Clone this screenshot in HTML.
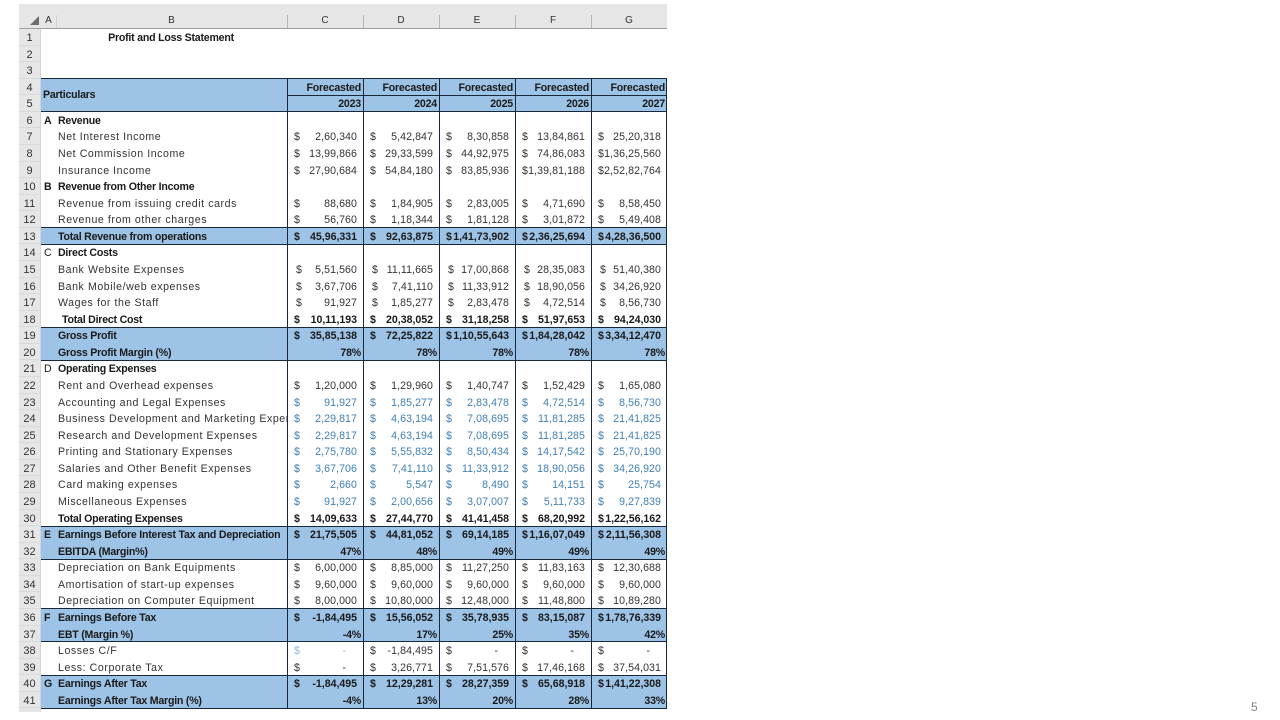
<!DOCTYPE html>
<html><head><meta charset="utf-8"><style>
html,body{margin:0;padding:0;background:#fff}
#p{position:relative;width:1280px;height:720px;overflow:hidden;background:#fff;font:10.6px/18.4px "Liberation Sans",sans-serif;color:#1a1a1a;filter:blur(.25px)}
#p div{box-sizing:border-box}
.hd{position:absolute;left:19px;top:4px;width:648px;height:25px;background:#e6e6e6;border-bottom:1px solid #a0a0a0}
.hd b{position:absolute;top:11px;font-weight:400;font-size:10px;line-height:12px;text-align:center;color:#333;width:76px;border-right:1px solid #b4b4b4;height:13px}
.r{position:absolute;left:19px;width:648px;height:16.57px;top:calc(29px + 16.57px * var(--n));display:flex;white-space:nowrap}
.n{width:22px;flex:none;background:#e6e6e6;text-align:center;border-bottom:1px solid #dadada;border-right:1px solid #d4d4d4;color:#333;height:16.57px;font-size:11px}
.a{width:17px;flex:none;padding-left:3px;font-weight:700}
.l{width:229px;flex:none;overflow:hidden;letter-spacing:.57px;color:#333}
.v{width:76px;flex:none;position:relative;text-align:right;padding-right:6px;letter-spacing:.08px;color:#333}
.v s{position:absolute;left:7px;top:0;text-decoration:none}
.p{padding-right:2px}
.d{padding-right:17px}
.b .l{font-weight:700;letter-spacing:-.22px;color:#1a1a1a}
.b .v{font-weight:700;letter-spacing:-.02px;color:#1a1a1a}
.b .p{letter-spacing:-.2px}
.u{background:linear-gradient(90deg,#0000 22px,#9dc3e6 22px)}
.t .v{color:#3f7fb5}
.i .v s{left:9px}
.ln{position:absolute;background:#16283a}
</style></head><body><div id="p">
<div class="hd">
<svg style="position:absolute;left:11px;top:12px" width="9" height="9"><path d="M9 0V9H0Z" fill="#6e6e6e"/></svg>
<b style="left:22px;width:15px;border-right:1px solid #d4d4d4">A</b>
<b style="left:37px;width:231px">B</b>
<b style="left:268px">C</b><b style="left:344px">D</b><b style="left:420px">E</b><b style="left:496px">F</b><b style="left:572px;border-right:0">G</b>
</div>

<div class="r" style="--n:0"><div class="n">1</div><div class="a"></div><div class="l" style="font-weight:700;letter-spacing:-.22px;color:#1a1a1a;text-align:center;width:229px;padding-right:3px">Profit and Loss Statement</div></div>
<div class="r" style="--n:1"><div class="n">2</div></div>
<div class="r" style="--n:2"><div class="n">3</div></div>
<div class="r b u" style="--n:3"><div class="n">4</div><div class="a"></div><div class="l"></div><div class="v p">Forecasted</div><div class="v p">Forecasted</div><div class="v p">Forecasted</div><div class="v p">Forecasted</div><div class="v p">Forecasted</div></div>
<div class="r b u" style="--n:4"><div class="n">5</div><div class="a"></div><div class="l"></div><div class="v p">2023</div><div class="v p">2024</div><div class="v p">2025</div><div class="v p">2026</div><div class="v p">2027</div></div>
<div style="position:absolute;left:43px;top:86px;font-weight:700;color:#1a1a1a;letter-spacing:-.22px">Particulars</div>

<div class="r b" style="--n:5"><div class="n">6</div><div class="a">A</div><div class="l">Revenue</div></div>
<div class="r" style="--n:6"><div class="n">7</div><div class="a"></div><div class="l">Net Interest Income</div><div class="v"><s>$</s>2,60,340</div><div class="v"><s>$</s>5,42,847</div><div class="v"><s>$</s>8,30,858</div><div class="v"><s>$</s>13,84,861</div><div class="v"><s>$</s>25,20,318</div></div>
<div class="r" style="--n:7"><div class="n">8</div><div class="a"></div><div class="l">Net Commission Income</div><div class="v"><s>$</s>13,99,866</div><div class="v"><s>$</s>29,33,599</div><div class="v"><s>$</s>44,92,975</div><div class="v"><s>$</s>74,86,083</div><div class="v"><s>$</s>1,36,25,560</div></div>
<div class="r" style="--n:8"><div class="n">9</div><div class="a"></div><div class="l">Insurance Income</div><div class="v"><s>$</s>27,90,684</div><div class="v"><s>$</s>54,84,180</div><div class="v"><s>$</s>83,85,936</div><div class="v"><s>$</s>1,39,81,188</div><div class="v"><s>$</s>2,52,82,764</div></div>
<div class="r b" style="--n:9"><div class="n">10</div><div class="a">B</div><div class="l">Revenue from Other Income</div></div>
<div class="r" style="--n:10"><div class="n">11</div><div class="a"></div><div class="l">Revenue from issuing credit cards</div><div class="v"><s>$</s>88,680</div><div class="v"><s>$</s>1,84,905</div><div class="v"><s>$</s>2,83,005</div><div class="v"><s>$</s>4,71,690</div><div class="v"><s>$</s>8,58,450</div></div>
<div class="r" style="--n:11"><div class="n">12</div><div class="a"></div><div class="l">Revenue from other charges</div><div class="v"><s>$</s>56,760</div><div class="v"><s>$</s>1,18,344</div><div class="v"><s>$</s>1,81,128</div><div class="v"><s>$</s>3,01,872</div><div class="v"><s>$</s>5,49,408</div></div>
<div class="r b u" style="--n:12"><div class="n">13</div><div class="a"></div><div class="l">Total Revenue from operations</div><div class="v"><s>$</s>45,96,331</div><div class="v"><s>$</s>92,63,875</div><div class="v"><s>$</s>1,41,73,902</div><div class="v"><s>$</s>2,36,25,694</div><div class="v"><s>$</s>4,28,36,500</div></div>
<div class="r b" style="--n:13"><div class="n">14</div><div class="a" style="font-weight:400">C</div><div class="l">Direct Costs</div></div>
<div class="r i" style="--n:14"><div class="n">15</div><div class="a"></div><div class="l">Bank Website Expenses</div><div class="v"><s>$</s>5,51,560</div><div class="v"><s>$</s>11,11,665</div><div class="v"><s>$</s>17,00,868</div><div class="v"><s>$</s>28,35,083</div><div class="v"><s>$</s>51,40,380</div></div>
<div class="r i" style="--n:15"><div class="n">16</div><div class="a"></div><div class="l">Bank Mobile/web expenses</div><div class="v"><s>$</s>3,67,706</div><div class="v"><s>$</s>7,41,110</div><div class="v"><s>$</s>11,33,912</div><div class="v"><s>$</s>18,90,056</div><div class="v"><s>$</s>34,26,920</div></div>
<div class="r i" style="--n:16"><div class="n">17</div><div class="a"></div><div class="l">Wages for the Staff</div><div class="v"><s>$</s>91,927</div><div class="v"><s>$</s>1,85,277</div><div class="v"><s>$</s>2,83,478</div><div class="v"><s>$</s>4,72,514</div><div class="v"><s>$</s>8,56,730</div></div>
<div class="r b" style="--n:17"><div class="n">18</div><div class="a"></div><div class="l" style="padding-left:4px">Total Direct Cost</div><div class="v"><s>$</s>10,11,193</div><div class="v"><s>$</s>20,38,052</div><div class="v"><s>$</s>31,18,258</div><div class="v"><s>$</s>51,97,653</div><div class="v"><s>$</s>94,24,030</div></div>
<div class="r b u" style="--n:18"><div class="n">19</div><div class="a"></div><div class="l">Gross Profit</div><div class="v"><s>$</s>35,85,138</div><div class="v"><s>$</s>72,25,822</div><div class="v"><s>$</s>1,10,55,643</div><div class="v"><s>$</s>1,84,28,042</div><div class="v"><s>$</s>3,34,12,470</div></div>
<div class="r b u" style="--n:19"><div class="n">20</div><div class="a"></div><div class="l">Gross Profit Margin (%)</div><div class="v p">78%</div><div class="v p">78%</div><div class="v p">78%</div><div class="v p">78%</div><div class="v p">78%</div></div>
<div class="r b" style="--n:20"><div class="n">21</div><div class="a" style="font-weight:400">D</div><div class="l">Operating Expenses</div></div>
<div class="r" style="--n:21"><div class="n">22</div><div class="a"></div><div class="l">Rent and Overhead expenses</div><div class="v"><s>$</s>1,20,000</div><div class="v"><s>$</s>1,29,960</div><div class="v"><s>$</s>1,40,747</div><div class="v"><s>$</s>1,52,429</div><div class="v"><s>$</s>1,65,080</div></div>
<div class="r t" style="--n:22"><div class="n">23</div><div class="a"></div><div class="l">Accounting and Legal Expenses</div><div class="v"><s>$</s>91,927</div><div class="v"><s>$</s>1,85,277</div><div class="v"><s>$</s>2,83,478</div><div class="v"><s>$</s>4,72,514</div><div class="v"><s>$</s>8,56,730</div></div>
<div class="r t" style="--n:23"><div class="n">24</div><div class="a"></div><div class="l">Business Development and Marketing Expenses</div><div class="v"><s>$</s>2,29,817</div><div class="v"><s>$</s>4,63,194</div><div class="v"><s>$</s>7,08,695</div><div class="v"><s>$</s>11,81,285</div><div class="v"><s>$</s>21,41,825</div></div>
<div class="r t" style="--n:24"><div class="n">25</div><div class="a"></div><div class="l">Research and Development Expenses</div><div class="v"><s>$</s>2,29,817</div><div class="v"><s>$</s>4,63,194</div><div class="v"><s>$</s>7,08,695</div><div class="v"><s>$</s>11,81,285</div><div class="v"><s>$</s>21,41,825</div></div>
<div class="r t" style="--n:25"><div class="n">26</div><div class="a"></div><div class="l">Printing and Stationary Expenses</div><div class="v"><s>$</s>2,75,780</div><div class="v"><s>$</s>5,55,832</div><div class="v"><s>$</s>8,50,434</div><div class="v"><s>$</s>14,17,542</div><div class="v"><s>$</s>25,70,190</div></div>
<div class="r t" style="--n:26"><div class="n">27</div><div class="a"></div><div class="l">Salaries and Other Benefit Expenses</div><div class="v"><s>$</s>3,67,706</div><div class="v"><s>$</s>7,41,110</div><div class="v"><s>$</s>11,33,912</div><div class="v"><s>$</s>18,90,056</div><div class="v"><s>$</s>34,26,920</div></div>
<div class="r t" style="--n:27"><div class="n">28</div><div class="a"></div><div class="l">Card making expenses</div><div class="v"><s>$</s>2,660</div><div class="v"><s>$</s>5,547</div><div class="v"><s>$</s>8,490</div><div class="v"><s>$</s>14,151</div><div class="v"><s>$</s>25,754</div></div>
<div class="r t" style="--n:28"><div class="n">29</div><div class="a"></div><div class="l">Miscellaneous Expenses</div><div class="v"><s>$</s>91,927</div><div class="v"><s>$</s>2,00,656</div><div class="v"><s>$</s>3,07,007</div><div class="v"><s>$</s>5,11,733</div><div class="v"><s>$</s>9,27,839</div></div>
<div class="r b" style="--n:29"><div class="n">30</div><div class="a"></div><div class="l">Total Operating Expenses</div><div class="v"><s>$</s>14,09,633</div><div class="v"><s>$</s>27,44,770</div><div class="v"><s>$</s>41,41,458</div><div class="v"><s>$</s>68,20,992</div><div class="v"><s>$</s>1,22,56,162</div></div>
<div class="r b u" style="--n:30"><div class="n">31</div><div class="a">E</div><div class="l">Earnings Before Interest Tax and Depreciation</div><div class="v"><s>$</s>21,75,505</div><div class="v"><s>$</s>44,81,052</div><div class="v"><s>$</s>69,14,185</div><div class="v"><s>$</s>1,16,07,049</div><div class="v"><s>$</s>2,11,56,308</div></div>
<div class="r b u" style="--n:31"><div class="n">32</div><div class="a"></div><div class="l">EBITDA (Margin%)</div><div class="v p">47%</div><div class="v p">48%</div><div class="v p">49%</div><div class="v p">49%</div><div class="v p">49%</div></div>
<div class="r" style="--n:32"><div class="n">33</div><div class="a"></div><div class="l">Depreciation on Bank Equipments</div><div class="v"><s>$</s>6,00,000</div><div class="v"><s>$</s>8,85,000</div><div class="v"><s>$</s>11,27,250</div><div class="v"><s>$</s>11,83,163</div><div class="v"><s>$</s>12,30,688</div></div>
<div class="r" style="--n:33"><div class="n">34</div><div class="a"></div><div class="l">Amortisation of start-up expenses</div><div class="v"><s>$</s>9,60,000</div><div class="v"><s>$</s>9,60,000</div><div class="v"><s>$</s>9,60,000</div><div class="v"><s>$</s>9,60,000</div><div class="v"><s>$</s>9,60,000</div></div>
<div class="r" style="--n:34"><div class="n">35</div><div class="a"></div><div class="l">Depreciation on Computer Equipment</div><div class="v"><s>$</s>8,00,000</div><div class="v"><s>$</s>10,80,000</div><div class="v"><s>$</s>12,48,000</div><div class="v"><s>$</s>11,48,800</div><div class="v"><s>$</s>10,89,280</div></div>
<div class="r b u" style="--n:35"><div class="n">36</div><div class="a">F</div><div class="l">Earnings Before Tax</div><div class="v"><s>$</s>-1,84,495</div><div class="v"><s>$</s>15,56,052</div><div class="v"><s>$</s>35,78,935</div><div class="v"><s>$</s>83,15,087</div><div class="v"><s>$</s>1,78,76,339</div></div>
<div class="r b u" style="--n:36"><div class="n">37</div><div class="a"></div><div class="l">EBT (Margin %)</div><div class="v p">-4%</div><div class="v p">17%</div><div class="v p">25%</div><div class="v p">35%</div><div class="v p">42%</div></div>
<div class="r" style="--n:37"><div class="n">38</div><div class="a"></div><div class="l">Losses C/F</div><div class="v d" style="color:#8fb8dc"><s>$</s>-</div><div class="v"><s>$</s>-1,84,495</div><div class="v d"><s>$</s>-</div><div class="v d"><s>$</s>-</div><div class="v d"><s>$</s>-</div></div>
<div class="r" style="--n:38"><div class="n">39</div><div class="a"></div><div class="l">Less: Corporate Tax</div><div class="v d"><s>$</s>-</div><div class="v"><s>$</s>3,26,771</div><div class="v"><s>$</s>7,51,576</div><div class="v"><s>$</s>17,46,168</div><div class="v"><s>$</s>37,54,031</div></div>
<div class="r b u" style="--n:39"><div class="n">40</div><div class="a">G</div><div class="l">Earnings After Tax</div><div class="v"><s>$</s>-1,84,495</div><div class="v"><s>$</s>12,29,281</div><div class="v"><s>$</s>28,27,359</div><div class="v"><s>$</s>65,68,918</div><div class="v"><s>$</s>1,41,22,308</div></div>
<div class="r b u" style="--n:40"><div class="n">41</div><div class="a"></div><div class="l">Earnings After Tax Margin (%)</div><div class="v p">-4%</div><div class="v p">13%</div><div class="v p">20%</div><div class="v p">28%</div><div class="v p">33%</div></div>
<div style="position:absolute;left:19px;top:708px;width:22px;height:4px;background:#e6e6e6;border-right:1px solid #d4d4d4"></div>

<div class="ln" style="left:41px;top:78px;width:626px;height:1.3px"></div>
<div class="ln" style="left:287px;top:95px;width:380px;height:1.3px"></div>
<div class="ln" style="left:41px;top:111px;width:626px;height:1.3px"></div>
<div class="ln" style="left:41px;top:227px;width:626px;height:1.3px"></div>
<div class="ln" style="left:41px;top:244px;width:626px;height:1.3px"></div>
<div class="ln" style="left:41px;top:327px;width:626px;height:1.3px"></div>
<div class="ln" style="left:41px;top:360px;width:626px;height:1.3px"></div>
<div class="ln" style="left:41px;top:526px;width:626px;height:1.3px"></div>
<div class="ln" style="left:41px;top:559px;width:626px;height:1.3px"></div>
<div class="ln" style="left:41px;top:608px;width:626px;height:1.3px"></div>
<div class="ln" style="left:41px;top:641px;width:626px;height:1.3px"></div>
<div class="ln" style="left:41px;top:675px;width:626px;height:1.3px"></div>
<div class="ln" style="left:41px;top:708px;width:626px;height:1.3px"></div>
<div class="ln" style="left:287px;top:78px;width:1.3px;height:631px"></div>
<div class="ln" style="left:363px;top:78px;width:1.3px;height:631px"></div>
<div class="ln" style="left:439px;top:78px;width:1.3px;height:631px"></div>
<div class="ln" style="left:515px;top:78px;width:1.3px;height:631px"></div>
<div class="ln" style="left:591px;top:78px;width:1.3px;height:631px"></div>
<div class="ln" style="left:666px;top:78px;width:1.3px;height:631px"></div>

<div style="position:absolute;left:1251px;top:700px;font-size:12px;color:#7f7f7f;line-height:14px">5</div>
</div></body></html>
